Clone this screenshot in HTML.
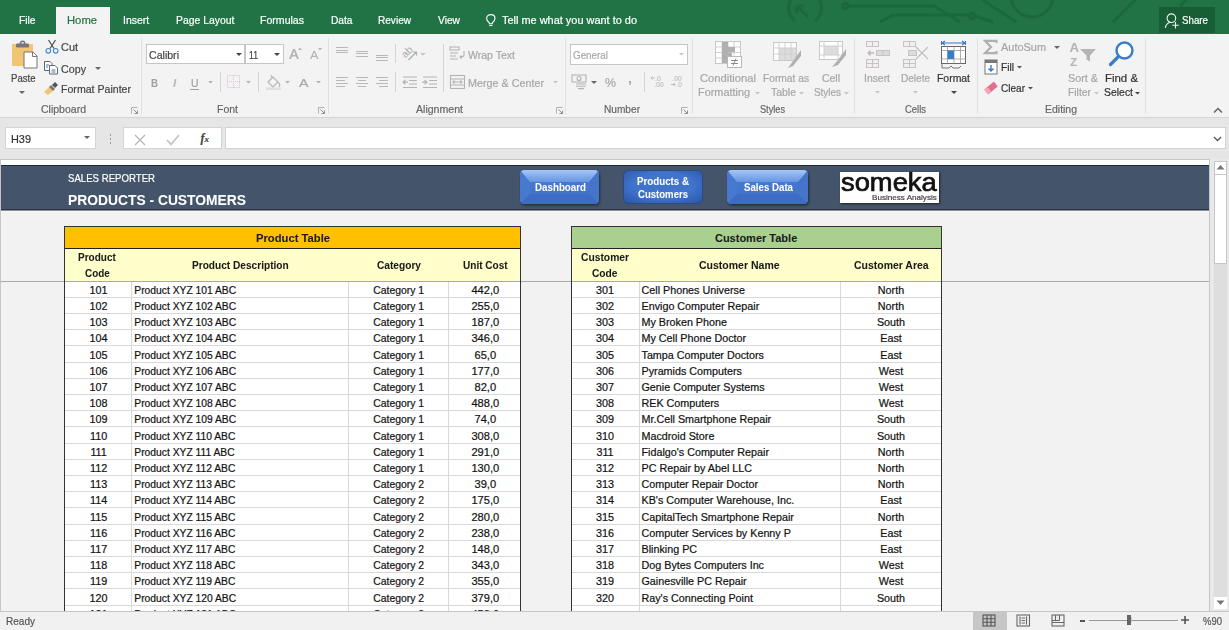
<!DOCTYPE html><html><head><meta charset="utf-8"><style>
html,body{margin:0;padding:0;width:1229px;height:630px;overflow:hidden;background:#f0f0f0}
body{position:relative;font-family:"Liberation Sans",sans-serif}
.t{position:absolute;white-space:nowrap;line-height:1;transform-origin:0 0;-webkit-text-stroke:0.2px currentColor}
svg{overflow:visible}
</style></head><body>
<div style="position:absolute;left:0px;top:0px;width:1229px;height:34px;background:#217346"></div>
<svg style="position:absolute;left:0;top:0" width="1229" height="34"><g fill="none" stroke="#1c673d" stroke-width="3">
<path d="M795 21 A16.5 16.5 0 1 1 815 21"/><path d="M808 17 L797 6 M797 6 L797 13 M797 6 L804 6" stroke-width="3"/>
<circle cx="845.5" cy="6" r="2.8"/><path d="M848.5 6 H934 L960 22"/>
<path d="M880 22 L893 15 H969"/><circle cx="972" cy="16" r="2.8"/><path d="M975 16 L993 22"/>
<path d="M980 -2 L1016 22"/><circle cx="1032" cy="-4" r="21"/>
<path d="M1113 22 L1137 -2"/><path d="M1180 6 L1188 -2"/>
</g></svg>
<div style="position:absolute;left:56px;top:7px;width:54px;height:27px;background:#f3f3f3"></div>
<div class="t" style="left:19.00px;top:15.19px;font-size:11px;color:#ffffff;transform:scaleX(0.9309);">File</div>
<div class="t" style="left:123.20px;top:15.19px;font-size:11px;color:#ffffff;transform:scaleX(0.9487);">Insert</div>
<div class="t" style="left:175.60px;top:15.19px;font-size:11px;color:#ffffff;transform:scaleX(0.9454);">Page Layout</div>
<div class="t" style="left:260.00px;top:15.19px;font-size:11px;color:#ffffff;transform:scaleX(0.9598);">Formulas</div>
<div class="t" style="left:330.50px;top:15.19px;font-size:11px;color:#ffffff;transform:scaleX(0.9253);">Data</div>
<div class="t" style="left:378.00px;top:15.19px;font-size:11px;color:#ffffff;transform:scaleX(0.9149);">Review</div>
<div class="t" style="left:438.00px;top:15.19px;font-size:11px;color:#ffffff;transform:scaleX(0.9304);">View</div>
<div class="t" style="left:67.00px;top:15.19px;font-size:11px;color:#217346;transform:scaleX(1.0224);">Home</div>
<svg style="position:absolute;left:486px;top:14px" width="11" height="13"><g fill="none" stroke="#fff" stroke-width="1.1"><path d="M3.3 8.8 C1.5 7.3 0.6 6 0.6 4.5 C0.6 2.2 2.5 0.6 4.8 0.6 C7.1 0.6 9 2.2 9 4.5 C9 6 8.1 7.3 6.3 8.8 V9.8 H3.3 Z"/><path d="M3.2 11.5 H6.4"/></g></svg>
<div class="t" style="left:502.00px;top:15.19px;font-size:11px;color:#ffffff;transform:scaleX(0.9945);">Tell me what you want to do</div>
<div style="position:absolute;left:1159px;top:7px;width:56px;height:26px;background:#175d35"></div>
<svg style="position:absolute;left:1163px;top:12px" width="18" height="17"><g fill="none" stroke="#f0f5f2" stroke-width="1.1"><circle cx="8.4" cy="6.2" r="4.3"/><path d="M2.3 16 C3 12.5 5.5 10.3 8.2 10.5"/><path d="M12.5 10 V16.5 M9.3 13.2 H15.8"/></g></svg>
<div class="t" style="left:1182.00px;top:15.19px;font-size:11px;color:#ffffff;transform:scaleX(0.8857);">Share</div>
<div style="position:absolute;left:0px;top:34px;width:1229px;height:83px;background:#f3f3f3"></div>
<div style="position:absolute;left:0px;top:117px;width:1229px;height:1px;background:#d5d5d5"></div>
<div style="position:absolute;left:141px;top:38px;width:1px;height:76px;background:#e1e1e1"></div>
<div style="position:absolute;left:328px;top:38px;width:1px;height:76px;background:#e1e1e1"></div>
<div style="position:absolute;left:565px;top:38px;width:1px;height:76px;background:#e1e1e1"></div>
<div style="position:absolute;left:692px;top:38px;width:1px;height:76px;background:#e1e1e1"></div>
<div style="position:absolute;left:854px;top:38px;width:1px;height:76px;background:#e1e1e1"></div>
<div style="position:absolute;left:977px;top:38px;width:1px;height:76px;background:#e1e1e1"></div>
<div style="position:absolute;left:1145px;top:38px;width:1px;height:76px;background:#e1e1e1"></div>
<div class="t" style="left:41.00px;top:103.69px;font-size:11px;color:#666666;transform:scaleX(0.9557);">Clipboard</div>
<div class="t" style="left:217.00px;top:103.69px;font-size:11px;color:#666666;transform:scaleX(0.9541);">Font</div>
<div class="t" style="left:416.00px;top:103.69px;font-size:11px;color:#666666;transform:scaleX(0.9608);">Alignment</div>
<div class="t" style="left:604.00px;top:103.69px;font-size:11px;color:#666666;transform:scaleX(0.9201);">Number</div>
<div class="t" style="left:760.00px;top:103.69px;font-size:11px;color:#666666;transform:scaleX(0.8346);">Styles</div>
<div class="t" style="left:905.00px;top:103.69px;font-size:11px;color:#666666;transform:scaleX(0.8589);">Cells</div>
<div class="t" style="left:1045.00px;top:103.69px;font-size:11px;color:#666666;transform:scaleX(0.9514);">Editing</div>
<svg style="position:absolute;left:131px;top:107px" width="7" height="7"><path d="M0.5 6.5 V0.5 H6.5" fill="none" stroke="#b0b0b0" stroke-width="1"/><path d="M2.5 2.5 L6.5 6.5 M6.5 3.5 V6.5 H3.5" fill="none" stroke="#909090" stroke-width="1"/></svg>
<svg style="position:absolute;left:318px;top:107px" width="7" height="7"><path d="M0.5 6.5 V0.5 H6.5" fill="none" stroke="#b0b0b0" stroke-width="1"/><path d="M2.5 2.5 L6.5 6.5 M6.5 3.5 V6.5 H3.5" fill="none" stroke="#909090" stroke-width="1"/></svg>
<svg style="position:absolute;left:556px;top:107px" width="7" height="7"><path d="M0.5 6.5 V0.5 H6.5" fill="none" stroke="#b0b0b0" stroke-width="1"/><path d="M2.5 2.5 L6.5 6.5 M6.5 3.5 V6.5 H3.5" fill="none" stroke="#909090" stroke-width="1"/></svg>
<svg style="position:absolute;left:681px;top:107px" width="7" height="7"><path d="M0.5 6.5 V0.5 H6.5" fill="none" stroke="#b0b0b0" stroke-width="1"/><path d="M2.5 2.5 L6.5 6.5 M6.5 3.5 V6.5 H3.5" fill="none" stroke="#909090" stroke-width="1"/></svg>
<svg style="position:absolute;left:10px;top:40px" width="30" height="30">
<rect x="2" y="4" width="21" height="22" rx="1" fill="#f0c674"/>
<rect x="6" y="3.5" width="13" height="4" rx="1.2" fill="#777"/><circle cx="12.6" cy="3.3" r="2.1" fill="none" stroke="#777" stroke-width="1.6"/>
<path d="M14 12 H23 L27 16 V28 H14 Z" fill="#fff" stroke="#777" stroke-width="1"/>
<path d="M22.5 12 V16.5 H27" fill="none" stroke="#777" stroke-width="1"/>
</svg>
<div class="t" style="left:10.50px;top:72.69px;font-size:11px;color:#444444;transform:scaleX(0.8710);">Paste</div>
<svg style="position:absolute;left:19px;top:90.5px" width="6" height="3"><path d="M0 0 H6 L3 3 Z" fill="#666"/></svg>
<svg style="position:absolute;left:44px;top:39px" width="16" height="16">
<path d="M4.5 1 L10 9.5 M11.5 1 L6 9.5" stroke="#555" stroke-width="1.3" fill="none"/>
<circle cx="4.3" cy="11.8" r="2.3" fill="none" stroke="#4a88cc" stroke-width="1.1"/><circle cx="11.7" cy="11.8" r="2.3" fill="none" stroke="#4a88cc" stroke-width="1.1"/>
</svg>
<div class="t" style="left:61.00px;top:41.69px;font-size:11px;color:#444444;transform:scaleX(0.9931);">Cut</div>
<svg style="position:absolute;left:43px;top:60px" width="17" height="15">
<path d="M1.5 1.5 H7 L9 3.5 V10.5 H1.5 Z" fill="#fff" stroke="#666" stroke-width="1"/>
<path d="M6.5 5.5 H12 L14.5 8 V14 H6.5 Z" fill="#fff" stroke="#666" stroke-width="1"/>
<path d="M3 5 H6 M3 7 H5" stroke="#3b7dc4" stroke-width="1"/><path d="M8.5 10 H12.5 M8.5 12 H12.5" stroke="#3b7dc4" stroke-width="1"/>
</svg>
<div class="t" style="left:61.00px;top:63.69px;font-size:11px;color:#444444;transform:scaleX(0.9735);">Copy</div>
<svg style="position:absolute;left:95px;top:66.5px" width="6" height="3"><path d="M0 0 H6 L3 3 Z" fill="#666"/></svg>
<svg style="position:absolute;left:43px;top:81px" width="17" height="15">
<path d="M1 11 L6 6 L10 10 L5 14 Z" fill="#f0c674"/>
<path d="M6 6 L10 10 L12 8 L8 4 Z" fill="#777"/><path d="M9 4 L12 1 L15 4 L12 7 Z" fill="#555"/>
</svg>
<div class="t" style="left:61.00px;top:83.69px;font-size:11px;color:#444444;transform:scaleX(0.9622);">Format Painter</div>
<div style="position:absolute;left:146px;top:44px;width:99px;height:20px;background:#fff;border:1px solid #c6c6c6;box-sizing:border-box"></div>
<div style="position:absolute;left:245px;top:44px;width:39px;height:20px;background:#fff;border:1px solid #c6c6c6;box-sizing:border-box"></div>
<div class="t" style="left:149.00px;top:49.69px;font-size:11px;color:#444;transform:scaleX(0.9623);">Calibri</div>
<div class="t" style="left:249.00px;top:49.69px;font-size:11px;color:#444;transform:scaleX(0.7881);">11</div>
<svg style="position:absolute;left:236px;top:52.5px" width="6" height="3"><path d="M0 0 H6 L3 3 Z" fill="#444"/></svg>
<svg style="position:absolute;left:274px;top:52.5px" width="6" height="3"><path d="M0 0 H6 L3 3 Z" fill="#444"/></svg>
<svg style="position:absolute;left:288px;top:46px" width="36" height="15"><g fill="#b4b4b4">
<path d="M1 13 L5 3 H7 L11 13 H9 L8 10.5 H4 L3 13 Z M4.6 9 H7.4 L6 5.2 Z"/><path d="M10 4 L12 1.5 L14 4 Z"/>
<path d="M22 13 L25.5 5 H27 L30.5 13 H29 L28.3 11 H24.2 L23.5 13 Z M24.7 9.7 H27.8 L26.2 6.3 Z"/><path d="M30 2 L32 4.5 L34 2 Z"/>
</g></svg>
<div class="t" style="left:151.00px;top:78.19px;font-size:11px;color:#a0a0a0;font-weight:bold;-webkit-text-stroke:0.05px currentColor;transform:scaleX(0.8812);">B</div>
<div class="t" style="left:173px;top:77.8px;font-size:11.5px;color:#a8a8a8;font-style:italic">I</div>
<div class="t" style="left:190.50px;top:77.69px;font-size:11px;color:#a0a0a0;transform:scaleX(0.9441);">U</div>
<div style="position:absolute;left:190px;top:89px;width:9px;height:1px;background:#a0a0a0"></div>
<svg style="position:absolute;left:207.5px;top:80.75px" width="5.0" height="2.5"><path d="M0 0 H5.0 L2.5 2.5 Z" fill="#b4b4b4"/></svg>
<div style="position:absolute;left:220px;top:72px;width:1px;height:20px;background:#d4d4d4"></div>
<svg style="position:absolute;left:227px;top:75px" width="14" height="14"><g fill="none" stroke="#d8c0d0" stroke-width="1" stroke-dasharray="1 1"><rect x="0.5" y="0.5" width="12" height="12"/><path d="M6.5 0 V13 M0 6.5 H13"/></g></svg>
<svg style="position:absolute;left:245.5px;top:80.75px" width="5.0" height="2.5"><path d="M0 0 H5.0 L2.5 2.5 Z" fill="#b4b4b4"/></svg>
<div style="position:absolute;left:258px;top:72px;width:1px;height:20px;background:#d4d4d4"></div>
<svg style="position:absolute;left:265px;top:74px" width="18" height="16"><g fill="none" stroke="#b4b4b4" stroke-width="1.1"><path d="M3 8 L8 3 L13 8 L8 13 Z"/><path d="M6 1 L7.5 4"/><path d="M13 8 C15 10 15 12 14 13"/></g><rect x="1" y="13.5" width="15" height="2.5" fill="#e0e0e0"/></svg>
<svg style="position:absolute;left:284.5px;top:80.75px" width="5.0" height="2.5"><path d="M0 0 H5.0 L2.5 2.5 Z" fill="#b4b4b4"/></svg>
<div class="t" style="left:298.50px;top:77.77px;font-size:11.5px;color:#a9a9a9;transform:scaleX(1.2385);">A</div>
<svg style="position:absolute;left:315.5px;top:80.75px" width="5.0" height="2.5"><path d="M0 0 H5.0 L2.5 2.5 Z" fill="#b4b4b4"/></svg>
<div style="position:absolute;left:336px;top:47.0px;width:12px;height:1.2px;background:#b8b8b8"></div><div style="position:absolute;left:336px;top:49.6px;width:12px;height:1.2px;background:#b8b8b8"></div><div style="position:absolute;left:336px;top:52.2px;width:12px;height:1.2px;background:#b8b8b8"></div>
<div style="position:absolute;left:356px;top:50.5px;width:12px;height:1.2px;background:#b8b8b8"></div><div style="position:absolute;left:356px;top:53.1px;width:12px;height:1.2px;background:#b8b8b8"></div><div style="position:absolute;left:356px;top:55.7px;width:12px;height:1.2px;background:#b8b8b8"></div>
<div style="position:absolute;left:376px;top:54.5px;width:12px;height:1.2px;background:#b8b8b8"></div><div style="position:absolute;left:376px;top:57.1px;width:12px;height:1.2px;background:#b8b8b8"></div><div style="position:absolute;left:376px;top:59.7px;width:12px;height:1.2px;background:#b8b8b8"></div>
<div style="position:absolute;left:395px;top:44px;width:1px;height:19px;background:#d4d4d4"></div>
<svg style="position:absolute;left:398px;top:44px" width="30" height="20"><text x="0" y="0" transform="translate(9.5 8.5) rotate(-45)" text-anchor="middle" dominant-baseline="middle" font-family="Liberation Sans" font-size="10.5" fill="#ababab">ab</text>
<path d="M10.5 16 L18.5 8 M15 8 H18.5 V11.5" fill="none" stroke="#ababab" stroke-width="1.1"/><path d="M22 9 H28 L25 11.5 Z" fill="#c4c4c4"/></svg>
<div style="position:absolute;left:336px;top:77.3px;width:12px;height:1.2px;background:#b8b8b8"></div><div style="position:absolute;left:336px;top:80.1px;width:9px;height:1.2px;background:#b8b8b8"></div><div style="position:absolute;left:336px;top:83.0px;width:12px;height:1.2px;background:#b8b8b8"></div><div style="position:absolute;left:336px;top:85.8px;width:9px;height:1.2px;background:#b8b8b8"></div>
<div style="position:absolute;left:356px;top:77.3px;width:12px;height:1.2px;background:#b8b8b8"></div><div style="position:absolute;left:358px;top:80.1px;width:8px;height:1.2px;background:#b8b8b8"></div><div style="position:absolute;left:356px;top:83.0px;width:12px;height:1.2px;background:#b8b8b8"></div><div style="position:absolute;left:358px;top:85.8px;width:8px;height:1.2px;background:#b8b8b8"></div>
<div style="position:absolute;left:376px;top:77.3px;width:12px;height:1.2px;background:#b8b8b8"></div><div style="position:absolute;left:379px;top:80.1px;width:9px;height:1.2px;background:#b8b8b8"></div><div style="position:absolute;left:376px;top:83.0px;width:12px;height:1.2px;background:#b8b8b8"></div><div style="position:absolute;left:379px;top:85.8px;width:9px;height:1.2px;background:#b8b8b8"></div>
<div style="position:absolute;left:395px;top:72px;width:1px;height:20px;background:#d4d4d4"></div>
<svg style="position:absolute;left:402px;top:76px" width="38" height="14"><g stroke="#b4b4b4" stroke-width="1.2" fill="none">
<path d="M1 1 H15 M7 4.5 H15 M7 8 H15 M1 11.5 H15"/><path d="M6 6.2 H1 M3.5 4 L1 6.2 L3.5 8.4"/>
<path d="M21 1 H35 M27 4.5 H35 M27 8 H35 M21 11.5 H35"/><path d="M20 6.2 H25 M22.5 4 L25 6.2 L22.5 8.4"/></g></svg>
<div style="position:absolute;left:443px;top:44px;width:1px;height:48px;background:#d4d4d4"></div>
<svg style="position:absolute;left:449px;top:46px" width="17" height="16"><g stroke="#b4b4b4" stroke-width="1.1" fill="none">
<rect x="1" y="1" width="9" height="3"/><path d="M1 7 H9 M1 10 H7 M1 13 H9"/><path d="M15 5 V9 C15 11 13 11 11 11 M12.5 9.5 L11 11 L12.5 12.5"/></g></svg>
<div class="t" style="left:468.00px;top:49.99px;font-size:11px;color:#a6a6a6;transform:scaleX(0.9570);">Wrap Text</div>
<svg style="position:absolute;left:449px;top:74px" width="17" height="16"><g stroke="#b4b4b4" stroke-width="1.1" fill="none">
<rect x="1.5" y="1.5" width="14" height="13"/><path d="M1.5 5 H15.5 M1.5 11 H15.5"/><path d="M4 8 H13 M5.5 6.5 L4 8 L5.5 9.5 M11.5 6.5 L13 8 L11.5 9.5"/></g></svg>
<div class="t" style="left:468.00px;top:77.69px;font-size:11px;color:#a6a6a6;transform:scaleX(0.9788);">Merge &amp; Center</div>
<svg style="position:absolute;left:552.5px;top:80.75px" width="5.0" height="2.5"><path d="M0 0 H5.0 L2.5 2.5 Z" fill="#c4c4c4"/></svg>
<div style="position:absolute;left:570px;top:44px;width:118px;height:21px;background:#fff;border:1px solid #c6c6c6;box-sizing:border-box"></div>
<div class="t" style="left:573.00px;top:49.69px;font-size:11px;color:#a8a8a8;transform:scaleX(0.8943);">General</div>
<svg style="position:absolute;left:678.5px;top:52.75px" width="5.0" height="2.5"><path d="M0 0 H5.0 L2.5 2.5 Z" fill="#c4c4c4"/></svg>
<svg style="position:absolute;left:571px;top:74px" width="18" height="16"><g fill="none" stroke="#b4b4b4" stroke-width="1.1">
<rect x="1" y="1" width="14" height="7"/><circle cx="8" cy="4.5" r="2"/><path d="M5 10 H15 M5 12.3 H15 M7 14.6 H13"/></g></svg>
<svg style="position:absolute;left:591px;top:80.5px" width="6" height="3"><path d="M0 0 H6 L3 3 Z" fill="#666"/></svg>
<div class="t" style="left:605.00px;top:77.34px;font-size:12px;color:#aaaaaa;transform:scaleX(1.0310);">%</div>
<div class="t" style="left:628.00px;top:72.84px;font-size:12px;color:#aaaaaa;font-weight:bold;-webkit-text-stroke:0.05px currentColor;transform:scaleX(1.1999);">,</div>
<div style="position:absolute;left:644px;top:72px;width:1px;height:20px;background:#d4d4d4"></div>
<svg style="position:absolute;left:650px;top:74px" width="36" height="16"><g fill="#b4b4b4" font-family="Liberation Sans" font-size="7">
<text x="5" y="6.5">.0</text><text x="4" y="13">.00</text><path d="M1 4 H5 M2.5 2.5 L1 4 L2.5 5.5" stroke="#b4b4b4" fill="none" stroke-width="0.9"/>
<text x="22" y="6.5">.00</text><text x="26" y="13">.0</text><path d="M21 10.5 H25 M23.5 9 L25 10.5 L23.5 12" stroke="#b4b4b4" fill="none" stroke-width="0.9"/></g></svg>
<svg style="position:absolute;left:715px;top:41px" width="29" height="28">
<g fill="#fff" stroke="#c8c8c8" stroke-width="1"><rect x="0.5" y="0.5" width="25" height="22"/></g>
<g stroke="#d0d0d0" stroke-width="1"><path d="M7 0.5 V22.5 M13 0.5 V22.5 M19 0.5 V22.5 M0.5 6 H25.5 M0.5 11.5 H25.5 M0.5 17 H25.5"/></g>
<rect x="7" y="1" width="6" height="21" fill="#b0b0b0"/><rect x="13" y="6" width="7" height="5" fill="#b0b0b0"/><rect x="13" y="11.5" width="4" height="5" fill="#b0b0b0"/>
<rect x="12.5" y="15.5" width="14" height="11" fill="#fff" stroke="#b8b8b8"/><path d="M16 19.5 H23 M16 22.5 H23 M21 17.5 L18 24.5" stroke="#888" stroke-width="1"/>
</svg>
<div class="t" style="left:700.00px;top:72.69px;font-size:11px;color:#a6a6a6;transform:scaleX(1.0175);">Conditional</div>
<div class="t" style="left:698.00px;top:86.99px;font-size:11px;color:#a6a6a6;transform:scaleX(0.9891);">Formatting</div>
<svg style="position:absolute;left:754.5px;top:91.75px" width="5.0" height="2.5"><path d="M0 0 H5.0 L2.5 2.5 Z" fill="#c4c4c4"/></svg>
<svg style="position:absolute;left:773px;top:42px" width="30" height="28">
<rect x="0.5" y="0.5" width="23" height="18" fill="#fff" stroke="#c8c8c8"/>
<rect x="6" y="6" width="17" height="12" fill="#dcdcdc"/>
<path d="M6 0.5 V18.5 M12 0.5 V18.5 M18 0.5 V18.5 M0.5 6 H23.5 M0.5 12 H23.5" stroke="#d0d0d0"/>
<path d="M15 26 L20 19 L28 8 V14 L20 24 Z" fill="#b0b0b0"/>
</svg>
<div class="t" style="left:763.00px;top:72.69px;font-size:11px;color:#a6a6a6;transform:scaleX(0.9291);">Format as</div>
<div class="t" style="left:771.00px;top:86.99px;font-size:11px;color:#a6a6a6;transform:scaleX(0.9507);">Table</div>
<svg style="position:absolute;left:798.5px;top:91.75px" width="5.0" height="2.5"><path d="M0 0 H5.0 L2.5 2.5 Z" fill="#c4c4c4"/></svg>
<svg style="position:absolute;left:819px;top:41px" width="30" height="28">
<rect x="0.5" y="0.5" width="23" height="18" fill="#fff" stroke="#c8c8c8"/>
<rect x="5" y="5" width="14" height="9" fill="#dcdcdc"/>
<path d="M5 0.5 V18.5 M19 0.5 V18.5 M0.5 5 H23.5 M0.5 14 H23.5" stroke="#d0d0d0"/>
<path d="M13 26 L19 19 L27 8 V14 L19 24 Z" fill="#b0b0b0"/>
</svg>
<div class="t" style="left:822.00px;top:72.69px;font-size:11px;color:#a6a6a6;transform:scaleX(0.9499);">Cell</div>
<div class="t" style="left:814.00px;top:86.99px;font-size:11px;color:#a6a6a6;transform:scaleX(0.9013);">Styles</div>
<svg style="position:absolute;left:843.5px;top:91.75px" width="5.0" height="2.5"><path d="M0 0 H5.0 L2.5 2.5 Z" fill="#c4c4c4"/></svg>
<svg style="position:absolute;left:865px;top:40px" width="28" height="28"><g fill="#f4eef4" stroke="#c4c4c4" stroke-width="1">
<rect x="1.5" y="1.5" width="12" height="5"/><path d="M7.5 1.5 V6.5"/>
<rect x="11.5" y="10.5" width="13" height="5" fill="#dcdcdc"/><path d="M18 10.5 V15.5"/>
<rect x="1.5" y="19.5" width="12" height="8"/><path d="M7.5 19.5 V27.5 M1.5 23.5 H13.5"/></g>
<path d="M9 13 H3 M5.5 10.5 L3 13 L5.5 15.5" stroke="#b8b8b8" stroke-width="1.3" fill="none"/></svg>
<div class="t" style="left:864.00px;top:72.69px;font-size:11px;color:#a6a6a6;transform:scaleX(0.9451);">Insert</div>
<svg style="position:absolute;left:874.5px;top:90.75px" width="5.0" height="2.5"><path d="M0 0 H5.0 L2.5 2.5 Z" fill="#c4c4c4"/></svg>
<svg style="position:absolute;left:902px;top:40px" width="30" height="28"><g fill="#f4eef4" stroke="#c4c4c4" stroke-width="1">
<rect x="1.5" y="1.5" width="12" height="5"/><path d="M7.5 1.5 V6.5"/>
<rect x="6.5" y="10.5" width="8" height="5" fill="#dcdcdc"/>
<rect x="1.5" y="19.5" width="12" height="8"/><path d="M7.5 19.5 V27.5 M1.5 23.5 H13.5"/></g>
<path d="M14 7 L26 19 M26 7 L14 19" stroke="#c0c0c0" stroke-width="1.3"/></svg>
<div class="t" style="left:901.00px;top:72.69px;font-size:11px;color:#a6a6a6;transform:scaleX(0.9120);">Delete</div>
<svg style="position:absolute;left:912.5px;top:90.75px" width="5.0" height="2.5"><path d="M0 0 H5.0 L2.5 2.5 Z" fill="#c4c4c4"/></svg>
<svg style="position:absolute;left:940px;top:40px" width="28" height="30">
<path d="M1.5 1 V5 M25.5 1 V5 M2 3 H25 M5 1 L2 3 L5 5 M22 1 L25 3 L22 5" stroke="#3b7dc4" stroke-width="1.1" fill="none"/>
<rect x="1.5" y="6.5" width="24" height="17" fill="#fff" stroke="#666"/>
<path d="M7.5 6.5 V23.5 M14 6.5 V23.5 M20.5 6.5 V23.5 M1.5 10.5 H25.5 M1.5 19 H25.5" stroke="#999" stroke-width="0.8"/>
<rect x="7.5" y="10.5" width="6.5" height="8.5" fill="#3b7dc4"/>
<path d="M2 24 V28 H9 L11 26 L13 28 H19 L21 26" fill="none" stroke="#777" stroke-width="1"/>
</svg>
<div class="t" style="left:937.00px;top:72.69px;font-size:11px;color:#333;transform:scaleX(0.9472);">Format</div>
<svg style="position:absolute;left:951px;top:90.5px" width="6" height="3"><path d="M0 0 H6 L3 3 Z" fill="#444"/></svg>
<svg style="position:absolute;left:983px;top:39px" width="16" height="16"><path d="M13.5 4 V1.8 H2 L8 8 L2 14.2 H13.5 V12" fill="none" stroke="#b0b0b0" stroke-width="2.2" stroke-linejoin="miter"/></svg>
<div class="t" style="left:1001.00px;top:42.19px;font-size:11px;color:#a6a6a6;transform:scaleX(0.9945);">AutoSum</div>
<svg style="position:absolute;left:1054px;top:45.5px" width="6" height="3"><path d="M0 0 H6 L3 3 Z" fill="#666"/></svg>
<svg style="position:absolute;left:984px;top:59px" width="15" height="17"><rect x="1" y="1" width="12" height="14" fill="#fff" stroke="#777"/><rect x="1" y="1" width="12" height="3" fill="#777"/>
<path d="M7 6 V12 M4.5 9.5 L7 12 L9.5 9.5" stroke="#3b7dc4" stroke-width="1.5" fill="none"/></svg>
<div class="t" style="left:1001.00px;top:61.69px;font-size:11px;color:#333;transform:scaleX(0.9252);">Fill</div>
<svg style="position:absolute;left:1016.5px;top:65.75px" width="5.0" height="2.5"><path d="M0 0 H5.0 L2.5 2.5 Z" fill="#555"/></svg>
<svg style="position:absolute;left:984px;top:81px" width="14" height="14"><g transform="translate(7 7) rotate(-40)"><rect x="-6.3" y="-3.2" width="12.6" height="6.4" rx="1" fill="#e36f8c"/><rect x="-6.3" y="-3.2" width="4.2" height="6.4" rx="1" fill="#f2a7b8"/></g></svg>
<div class="t" style="left:1001.00px;top:83.49px;font-size:11px;color:#333;transform:scaleX(0.9130);">Clear</div>
<svg style="position:absolute;left:1027.5px;top:86.75px" width="5.0" height="2.5"><path d="M0 0 H5.0 L2.5 2.5 Z" fill="#555"/></svg>
<svg style="position:absolute;left:1069px;top:41px" width="28" height="27"><g fill="#b4b4b4">
<text x="0.5" y="11.3" font-family="Liberation Sans" font-size="13" font-weight="bold">A</text><text x="1" y="24.5" font-family="Liberation Sans" font-size="11.5" font-weight="bold">Z</text>
<path d="M11 8 H27 L21 14.5 V20.5 L17.5 18.5 V14.5 Z"/></g></svg>
<div class="t" style="left:1068.00px;top:72.69px;font-size:11px;color:#a6a6a6;transform:scaleX(0.9814);">Sort &amp;</div>
<div class="t" style="left:1068.00px;top:86.99px;font-size:11px;color:#a6a6a6;transform:scaleX(0.9409);">Filter</div>
<svg style="position:absolute;left:1093.5px;top:91.75px" width="5.0" height="2.5"><path d="M0 0 H5.0 L2.5 2.5 Z" fill="#c4c4c4"/></svg>
<svg style="position:absolute;left:1108px;top:40px" width="28" height="28"><circle cx="16.5" cy="10.5" r="8" fill="#fff" stroke="#3b7dc4" stroke-width="2.4"/><path d="M10.5 16.5 L2.5 24.5" stroke="#3b7dc4" stroke-width="3.2" stroke-linecap="round"/></svg>
<div class="t" style="left:1105.00px;top:72.69px;font-size:11px;color:#333;transform:scaleX(1.0380);">Find &amp;</div>
<div class="t" style="left:1104.00px;top:86.99px;font-size:11px;color:#333;transform:scaleX(0.9485);">Select</div>
<svg style="position:absolute;left:1134.5px;top:91.75px" width="5.0" height="2.5"><path d="M0 0 H5.0 L2.5 2.5 Z" fill="#444"/></svg>
<svg style="position:absolute;left:1213px;top:107px" width="10" height="7"><path d="M1 5.5 L5 1.5 L9 5.5" fill="none" stroke="#666" stroke-width="1.5"/></svg>
<div style="position:absolute;left:0px;top:118px;width:1229px;height:41px;background:#e6e6e6"></div>
<div style="position:absolute;left:5px;top:127px;width:91px;height:22px;background:#fff;border:1px solid #d4d4d4;box-sizing:border-box"></div>
<div class="t" style="left:11.00px;top:134.19px;font-size:11px;color:#333;transform:scaleX(0.9911);">H39</div>
<svg style="position:absolute;left:84px;top:136.0px" width="6" height="3"><path d="M0 0 H6 L3 3 Z" fill="#666"/></svg>
<div style="position:absolute;left:109.5px;top:134px;width:1.5px;height:1.5px;background:#9a9a9a"></div>
<div style="position:absolute;left:109.5px;top:138px;width:1.5px;height:1.5px;background:#9a9a9a"></div>
<div style="position:absolute;left:109.5px;top:142px;width:1.5px;height:1.5px;background:#9a9a9a"></div>
<div style="position:absolute;left:123px;top:127px;width:99px;height:22px;background:#fff;border:1px solid #d4d4d4;box-sizing:border-box"></div>
<svg style="position:absolute;left:134px;top:134px" width="12" height="12"><path d="M1 1 L11 11 M11 1 L1 11" stroke="#b8b8b8" stroke-width="1.4"/></svg>
<svg style="position:absolute;left:166px;top:134px" width="14" height="12"><path d="M1 6 L5 10.5 L13 1" fill="none" stroke="#c0c0c0" stroke-width="1.6"/></svg>
<div class="t" style="left:200.5px;top:131.5px;font-size:12px;color:#444;font-style:italic;font-family:'Liberation Serif',serif;font-weight:bold">f<span style="font-size:9px">x</span></div>
<div style="position:absolute;left:225px;top:127px;width:1001px;height:22px;background:#fff;border:1px solid #d4d4d4;box-sizing:border-box"></div>
<svg style="position:absolute;left:1213px;top:136px" width="9" height="6"><path d="M1 1 L4.5 4.5 L8 1" fill="none" stroke="#555" stroke-width="1.3"/></svg>
<div style="position:absolute;left:0px;top:159px;width:1229px;height:453px;background:#e9e9e9"></div>
<div style="position:absolute;left:0px;top:159px;width:1210px;height:453px;background:#f2f2f2"></div>
<div style="position:absolute;left:0px;top:159px;width:1210px;height:1px;background:#c6c6c6"></div>
<div style="position:absolute;left:0px;top:159px;width:1px;height:453px;background:#c6c6c6"></div>
<div style="position:absolute;left:1209px;top:159px;width:1px;height:453px;background:#c6c6c6"></div>
<div style="position:absolute;left:1px;top:160px;width:1208px;height:5px;background:#ffffff"></div>
<div style="position:absolute;left:1px;top:165px;width:1208px;height:45px;background:#44546a"></div>
<div style="position:absolute;left:1px;top:165px;width:1208px;height:1px;background:#1f2a3a"></div>
<div style="position:absolute;left:1px;top:209px;width:1208px;height:1px;background:#2c3646"></div>
<div style="position:absolute;left:1px;top:210px;width:1208px;height:1px;background:#8e9096"></div>
<div style="position:absolute;left:1px;top:211px;width:1208px;height:1px;background:#f6f6f6"></div>
<div class="t" style="left:68.00px;top:173.27px;font-size:11.5px;color:#ffffff;transform:scaleX(0.8368);">SALES REPORTER</div>
<div class="t" style="left:68.00px;top:192.65px;font-size:14px;color:#ffffff;font-weight:bold;-webkit-text-stroke:0.05px currentColor;transform:scaleX(0.9878);">PRODUCTS - CUSTOMERS</div>
<svg style="position:absolute;left:520px;top:170px;overflow:visible" width="79" height="34"><defs><clipPath id="bc1"><rect x="0" y="0" width="79" height="34" rx="4.5"/></clipPath><linearGradient id="tg1" x1="0" y1="0" x2="0" y2="1"><stop offset="0" stop-color="#a6c6f8"/><stop offset="1" stop-color="#6495e0"/></linearGradient><linearGradient id="cg1" x1="0" y1="0" x2="0" y2="1"><stop offset="0" stop-color="#4c7dd4"/><stop offset="1" stop-color="#3e6ec6"/></linearGradient><filter id="sh1" x="-10%" y="-10%" width="130%" height="140%"><feDropShadow dx="1" dy="1.5" stdDeviation="1" flood-color="#1a2230" flood-opacity="0.8"/></filter></defs><g filter="url(#sh1)"><rect x="0" y="0" width="79" height="34" rx="4.5" fill="#3f6fc6"/></g><g clip-path="url(#bc1)"><rect x="0" y="0" width="79" height="34" fill="url(#cg1)"/><path d="M0 0 L10 12 L10 24 L0 34 Z" fill="#4879d0"/><path d="M79 0 L69 12 L69 24 L79 34 Z" fill="#4475cb"/><path d="M0 34 L10 24 L69 24 L79 34 Z" fill="#3d6cc2"/><path d="M0 0 L79 0 L69 12 L10 12 Z" fill="url(#tg1)"/></g></svg>
<div class="t" style="left:534.50px;top:182.29px;font-size:11px;color:#ffffff;font-weight:bold;-webkit-text-stroke:0.05px currentColor;transform:scaleX(0.8876);">Dashboard</div>
<svg style="position:absolute;left:623px;top:170px;overflow:visible" width="80" height="34"><defs><radialGradient id="pg2" cx="50%" cy="45%" r="70%"><stop offset="0.55" stop-color="#4073cc"/><stop offset="1" stop-color="#2b57a8"/></radialGradient></defs><rect x="0.5" y="0.5" width="79" height="33" rx="5" fill="url(#pg2)" stroke="#2a4a86" stroke-width="1"/></svg>
<div class="t" style="left:637.00px;top:176.09px;font-size:11px;color:#ffffff;font-weight:bold;-webkit-text-stroke:0.05px currentColor;transform:scaleX(0.8862);">Products &amp;</div>
<div class="t" style="left:638.00px;top:189.49px;font-size:11px;color:#ffffff;font-weight:bold;-webkit-text-stroke:0.05px currentColor;transform:scaleX(0.8702);">Customers</div>
<svg style="position:absolute;left:727px;top:170px;overflow:visible" width="81" height="34"><defs><clipPath id="bc3"><rect x="0" y="0" width="81" height="34" rx="4.5"/></clipPath><linearGradient id="tg3" x1="0" y1="0" x2="0" y2="1"><stop offset="0" stop-color="#a6c6f8"/><stop offset="1" stop-color="#6495e0"/></linearGradient><linearGradient id="cg3" x1="0" y1="0" x2="0" y2="1"><stop offset="0" stop-color="#4c7dd4"/><stop offset="1" stop-color="#3e6ec6"/></linearGradient><filter id="sh3" x="-10%" y="-10%" width="130%" height="140%"><feDropShadow dx="1" dy="1.5" stdDeviation="1" flood-color="#1a2230" flood-opacity="0.8"/></filter></defs><g filter="url(#sh3)"><rect x="0" y="0" width="81" height="34" rx="4.5" fill="#3f6fc6"/></g><g clip-path="url(#bc3)"><rect x="0" y="0" width="81" height="34" fill="url(#cg3)"/><path d="M0 0 L10 12 L10 24 L0 34 Z" fill="#4879d0"/><path d="M81 0 L71 12 L71 24 L81 34 Z" fill="#4475cb"/><path d="M0 34 L10 24 L71 24 L81 34 Z" fill="#3d6cc2"/><path d="M0 0 L81 0 L71 12 L10 12 Z" fill="url(#tg3)"/></g></svg>
<div class="t" style="left:743.50px;top:182.09px;font-size:11px;color:#ffffff;font-weight:bold;-webkit-text-stroke:0.05px currentColor;transform:scaleX(0.8806);">Sales Data</div>
<div style="position:absolute;left:840px;top:172px;width:99px;height:31px;background:#fff;box-shadow:1px 1px 2px #222"></div>
<div class="t" style="left:841.30px;top:169.64px;font-size:25px;color:#111111;-webkit-text-stroke:0.7px #111;transform:scaleX(1.0932);">someka</div>
<div class="t" style="left:872.20px;top:193.63px;font-size:8px;color:#444;transform:scaleX(1.0120);">Business Analysis</div>
<div style="position:absolute;left:1px;top:281px;width:1208px;height:1px;background:#a9a9a9"></div>
<div style="position:absolute;left:64px;top:226px;width:456px;height:389px;background:#ffffff"></div>
<div style="position:absolute;left:64px;top:226px;width:456px;height:22px;background:#ffc000"></div>
<div style="position:absolute;left:64px;top:249px;width:456px;height:32px;background:#ffffcc"></div>
<div style="position:absolute;left:64px;top:297px;width:456px;height:1px;background:#d9d9d9"></div>
<div style="position:absolute;left:64px;top:313px;width:456px;height:1px;background:#d9d9d9"></div>
<div style="position:absolute;left:64px;top:329px;width:456px;height:1px;background:#d9d9d9"></div>
<div style="position:absolute;left:64px;top:345px;width:456px;height:1px;background:#d9d9d9"></div>
<div style="position:absolute;left:64px;top:362px;width:456px;height:1px;background:#d9d9d9"></div>
<div style="position:absolute;left:64px;top:378px;width:456px;height:1px;background:#d9d9d9"></div>
<div style="position:absolute;left:64px;top:394px;width:456px;height:1px;background:#d9d9d9"></div>
<div style="position:absolute;left:64px;top:410px;width:456px;height:1px;background:#d9d9d9"></div>
<div style="position:absolute;left:64px;top:426px;width:456px;height:1px;background:#d9d9d9"></div>
<div style="position:absolute;left:64px;top:443px;width:456px;height:1px;background:#d9d9d9"></div>
<div style="position:absolute;left:64px;top:459px;width:456px;height:1px;background:#d9d9d9"></div>
<div style="position:absolute;left:64px;top:475px;width:456px;height:1px;background:#d9d9d9"></div>
<div style="position:absolute;left:64px;top:491px;width:456px;height:1px;background:#d9d9d9"></div>
<div style="position:absolute;left:64px;top:507px;width:456px;height:1px;background:#d9d9d9"></div>
<div style="position:absolute;left:64px;top:524px;width:456px;height:1px;background:#d9d9d9"></div>
<div style="position:absolute;left:64px;top:540px;width:456px;height:1px;background:#d9d9d9"></div>
<div style="position:absolute;left:64px;top:556px;width:456px;height:1px;background:#d9d9d9"></div>
<div style="position:absolute;left:64px;top:572px;width:456px;height:1px;background:#d9d9d9"></div>
<div style="position:absolute;left:64px;top:588px;width:456px;height:1px;background:#d9d9d9"></div>
<div style="position:absolute;left:64px;top:605px;width:456px;height:1px;background:#d9d9d9"></div>
<div style="position:absolute;left:131px;top:282px;width:1px;height:329px;background:#d9d9d9"></div>
<div style="position:absolute;left:348px;top:282px;width:1px;height:329px;background:#d9d9d9"></div>
<div style="position:absolute;left:448px;top:282px;width:1px;height:329px;background:#d9d9d9"></div>
<div style="position:absolute;left:64px;top:226px;width:457px;height:1px;background:#333"></div>
<div style="position:absolute;left:64px;top:248px;width:456px;height:1px;background:#222"></div>
<div style="position:absolute;left:64px;top:281px;width:456px;height:1px;background:#a9a9a9"></div>
<div style="position:absolute;left:64px;top:226px;width:1px;height:385px;background:#333"></div>
<div style="position:absolute;left:520px;top:226px;width:1px;height:385px;background:#333"></div>
<div style="position:absolute;left:571px;top:226px;width:370px;height:389px;background:#ffffff"></div>
<div style="position:absolute;left:571px;top:226px;width:370px;height:22px;background:#a9d08e"></div>
<div style="position:absolute;left:571px;top:249px;width:370px;height:32px;background:#ffffcc"></div>
<div style="position:absolute;left:571px;top:297px;width:370px;height:1px;background:#d9d9d9"></div>
<div style="position:absolute;left:571px;top:313px;width:370px;height:1px;background:#d9d9d9"></div>
<div style="position:absolute;left:571px;top:329px;width:370px;height:1px;background:#d9d9d9"></div>
<div style="position:absolute;left:571px;top:345px;width:370px;height:1px;background:#d9d9d9"></div>
<div style="position:absolute;left:571px;top:362px;width:370px;height:1px;background:#d9d9d9"></div>
<div style="position:absolute;left:571px;top:378px;width:370px;height:1px;background:#d9d9d9"></div>
<div style="position:absolute;left:571px;top:394px;width:370px;height:1px;background:#d9d9d9"></div>
<div style="position:absolute;left:571px;top:410px;width:370px;height:1px;background:#d9d9d9"></div>
<div style="position:absolute;left:571px;top:426px;width:370px;height:1px;background:#d9d9d9"></div>
<div style="position:absolute;left:571px;top:443px;width:370px;height:1px;background:#d9d9d9"></div>
<div style="position:absolute;left:571px;top:459px;width:370px;height:1px;background:#d9d9d9"></div>
<div style="position:absolute;left:571px;top:475px;width:370px;height:1px;background:#d9d9d9"></div>
<div style="position:absolute;left:571px;top:491px;width:370px;height:1px;background:#d9d9d9"></div>
<div style="position:absolute;left:571px;top:507px;width:370px;height:1px;background:#d9d9d9"></div>
<div style="position:absolute;left:571px;top:524px;width:370px;height:1px;background:#d9d9d9"></div>
<div style="position:absolute;left:571px;top:540px;width:370px;height:1px;background:#d9d9d9"></div>
<div style="position:absolute;left:571px;top:556px;width:370px;height:1px;background:#d9d9d9"></div>
<div style="position:absolute;left:571px;top:572px;width:370px;height:1px;background:#d9d9d9"></div>
<div style="position:absolute;left:571px;top:588px;width:370px;height:1px;background:#d9d9d9"></div>
<div style="position:absolute;left:571px;top:605px;width:370px;height:1px;background:#d9d9d9"></div>
<div style="position:absolute;left:639px;top:282px;width:1px;height:329px;background:#d9d9d9"></div>
<div style="position:absolute;left:840px;top:282px;width:1px;height:329px;background:#d9d9d9"></div>
<div style="position:absolute;left:571px;top:226px;width:371px;height:1px;background:#333"></div>
<div style="position:absolute;left:571px;top:248px;width:370px;height:1px;background:#222"></div>
<div style="position:absolute;left:571px;top:281px;width:370px;height:1px;background:#a9a9a9"></div>
<div style="position:absolute;left:571px;top:226px;width:1px;height:385px;background:#333"></div>
<div style="position:absolute;left:941px;top:226px;width:1px;height:385px;background:#333"></div>
<div style="position:absolute;left:0;top:0;width:1229px;height:611px;overflow:hidden"><div class="t" style="left:89.59px;top:285.26px;font-size:10.8px;color:#111111;">101</div><div class="t" style="left:134.30px;top:285.68px;font-size:10.3px;color:#111111;">Product XYZ 101 ABC</div><div class="t" style="left:373.26px;top:285.60px;font-size:10.4px;color:#111111;">Category 1</div><div class="t" style="left:471.41px;top:285.00px;font-size:11.1px;color:#111111;">442,0</div><div class="t" style="left:89.59px;top:301.26px;font-size:10.8px;color:#111111;">102</div><div class="t" style="left:134.30px;top:301.68px;font-size:10.3px;color:#111111;">Product XYZ 102 ABC</div><div class="t" style="left:373.26px;top:301.60px;font-size:10.4px;color:#111111;">Category 1</div><div class="t" style="left:471.41px;top:301.00px;font-size:11.1px;color:#111111;">255,0</div><div class="t" style="left:89.59px;top:317.26px;font-size:10.8px;color:#111111;">103</div><div class="t" style="left:134.30px;top:317.68px;font-size:10.3px;color:#111111;">Product XYZ 103 ABC</div><div class="t" style="left:373.26px;top:317.60px;font-size:10.4px;color:#111111;">Category 1</div><div class="t" style="left:471.41px;top:317.00px;font-size:11.1px;color:#111111;">187,0</div><div class="t" style="left:89.59px;top:333.26px;font-size:10.8px;color:#111111;">104</div><div class="t" style="left:134.30px;top:333.68px;font-size:10.3px;color:#111111;">Product XYZ 104 ABC</div><div class="t" style="left:373.26px;top:333.60px;font-size:10.4px;color:#111111;">Category 1</div><div class="t" style="left:471.41px;top:333.00px;font-size:11.1px;color:#111111;">346,0</div><div class="t" style="left:89.59px;top:350.26px;font-size:10.8px;color:#111111;">105</div><div class="t" style="left:134.30px;top:350.68px;font-size:10.3px;color:#111111;">Product XYZ 105 ABC</div><div class="t" style="left:373.26px;top:350.60px;font-size:10.4px;color:#111111;">Category 1</div><div class="t" style="left:474.50px;top:350.00px;font-size:11.1px;color:#111111;">65,0</div><div class="t" style="left:89.59px;top:366.26px;font-size:10.8px;color:#111111;">106</div><div class="t" style="left:134.30px;top:366.68px;font-size:10.3px;color:#111111;">Product XYZ 106 ABC</div><div class="t" style="left:373.26px;top:366.60px;font-size:10.4px;color:#111111;">Category 1</div><div class="t" style="left:471.41px;top:366.00px;font-size:11.1px;color:#111111;">177,0</div><div class="t" style="left:89.59px;top:382.26px;font-size:10.8px;color:#111111;">107</div><div class="t" style="left:134.30px;top:382.68px;font-size:10.3px;color:#111111;">Product XYZ 107 ABC</div><div class="t" style="left:373.26px;top:382.60px;font-size:10.4px;color:#111111;">Category 1</div><div class="t" style="left:474.50px;top:382.00px;font-size:11.1px;color:#111111;">82,0</div><div class="t" style="left:89.59px;top:398.26px;font-size:10.8px;color:#111111;">108</div><div class="t" style="left:134.30px;top:398.68px;font-size:10.3px;color:#111111;">Product XYZ 108 ABC</div><div class="t" style="left:373.26px;top:398.60px;font-size:10.4px;color:#111111;">Category 1</div><div class="t" style="left:471.41px;top:398.00px;font-size:11.1px;color:#111111;">488,0</div><div class="t" style="left:89.59px;top:414.26px;font-size:10.8px;color:#111111;">109</div><div class="t" style="left:134.30px;top:414.68px;font-size:10.3px;color:#111111;">Product XYZ 109 ABC</div><div class="t" style="left:373.26px;top:414.60px;font-size:10.4px;color:#111111;">Category 1</div><div class="t" style="left:474.50px;top:414.00px;font-size:11.1px;color:#111111;">74,0</div><div class="t" style="left:89.99px;top:431.26px;font-size:10.8px;color:#111111;">110</div><div class="t" style="left:134.30px;top:431.68px;font-size:10.3px;color:#111111;">Product XYZ 110 ABC</div><div class="t" style="left:373.26px;top:431.60px;font-size:10.4px;color:#111111;">Category 1</div><div class="t" style="left:471.41px;top:431.00px;font-size:11.1px;color:#111111;">308,0</div><div class="t" style="left:90.39px;top:447.26px;font-size:10.8px;color:#111111;">111</div><div class="t" style="left:134.30px;top:447.68px;font-size:10.3px;color:#111111;">Product XYZ 111 ABC</div><div class="t" style="left:373.26px;top:447.60px;font-size:10.4px;color:#111111;">Category 1</div><div class="t" style="left:471.41px;top:447.00px;font-size:11.1px;color:#111111;">291,0</div><div class="t" style="left:89.99px;top:463.26px;font-size:10.8px;color:#111111;">112</div><div class="t" style="left:134.30px;top:463.68px;font-size:10.3px;color:#111111;">Product XYZ 112 ABC</div><div class="t" style="left:373.26px;top:463.60px;font-size:10.4px;color:#111111;">Category 1</div><div class="t" style="left:471.41px;top:463.00px;font-size:11.1px;color:#111111;">130,0</div><div class="t" style="left:89.99px;top:479.26px;font-size:10.8px;color:#111111;">113</div><div class="t" style="left:134.30px;top:479.68px;font-size:10.3px;color:#111111;">Product XYZ 113 ABC</div><div class="t" style="left:373.26px;top:479.60px;font-size:10.4px;color:#111111;">Category 2</div><div class="t" style="left:474.50px;top:479.00px;font-size:11.1px;color:#111111;">39,0</div><div class="t" style="left:89.99px;top:495.26px;font-size:10.8px;color:#111111;">114</div><div class="t" style="left:134.30px;top:495.68px;font-size:10.3px;color:#111111;">Product XYZ 114 ABC</div><div class="t" style="left:373.26px;top:495.60px;font-size:10.4px;color:#111111;">Category 2</div><div class="t" style="left:471.41px;top:495.00px;font-size:11.1px;color:#111111;">175,0</div><div class="t" style="left:89.99px;top:512.26px;font-size:10.8px;color:#111111;">115</div><div class="t" style="left:134.30px;top:512.68px;font-size:10.3px;color:#111111;">Product XYZ 115 ABC</div><div class="t" style="left:373.26px;top:512.60px;font-size:10.4px;color:#111111;">Category 2</div><div class="t" style="left:471.41px;top:512.00px;font-size:11.1px;color:#111111;">280,0</div><div class="t" style="left:89.99px;top:528.26px;font-size:10.8px;color:#111111;">116</div><div class="t" style="left:134.30px;top:528.68px;font-size:10.3px;color:#111111;">Product XYZ 116 ABC</div><div class="t" style="left:373.26px;top:528.60px;font-size:10.4px;color:#111111;">Category 2</div><div class="t" style="left:471.41px;top:528.00px;font-size:11.1px;color:#111111;">238,0</div><div class="t" style="left:89.99px;top:544.26px;font-size:10.8px;color:#111111;">117</div><div class="t" style="left:134.30px;top:544.68px;font-size:10.3px;color:#111111;">Product XYZ 117 ABC</div><div class="t" style="left:373.26px;top:544.60px;font-size:10.4px;color:#111111;">Category 2</div><div class="t" style="left:471.41px;top:544.00px;font-size:11.1px;color:#111111;">148,0</div><div class="t" style="left:89.99px;top:560.26px;font-size:10.8px;color:#111111;">118</div><div class="t" style="left:134.30px;top:560.68px;font-size:10.3px;color:#111111;">Product XYZ 118 ABC</div><div class="t" style="left:373.26px;top:560.60px;font-size:10.4px;color:#111111;">Category 2</div><div class="t" style="left:471.41px;top:560.00px;font-size:11.1px;color:#111111;">343,0</div><div class="t" style="left:89.99px;top:576.26px;font-size:10.8px;color:#111111;">119</div><div class="t" style="left:134.30px;top:576.68px;font-size:10.3px;color:#111111;">Product XYZ 119 ABC</div><div class="t" style="left:373.26px;top:576.60px;font-size:10.4px;color:#111111;">Category 2</div><div class="t" style="left:471.41px;top:576.00px;font-size:11.1px;color:#111111;">355,0</div><div class="t" style="left:89.59px;top:593.26px;font-size:10.8px;color:#111111;">120</div><div class="t" style="left:134.30px;top:593.68px;font-size:10.3px;color:#111111;">Product XYZ 120 ABC</div><div class="t" style="left:373.26px;top:593.60px;font-size:10.4px;color:#111111;">Category 2</div><div class="t" style="left:471.41px;top:593.00px;font-size:11.1px;color:#111111;">379,0</div><div class="t" style="left:89.59px;top:609.26px;font-size:10.8px;color:#111111;">121</div><div class="t" style="left:134.30px;top:609.68px;font-size:10.3px;color:#111111;">Product XYZ 121 ABC</div><div class="t" style="left:373.26px;top:609.60px;font-size:10.4px;color:#111111;">Category 2</div><div class="t" style="left:471.41px;top:609.00px;font-size:11.1px;color:#111111;">453,0</div><div class="t" style="left:595.99px;top:285.26px;font-size:10.8px;color:#111111;">301</div><div class="t" style="left:641.50px;top:285.30px;font-size:10.75px;color:#111111;">Cell Phones Universe</div><div class="t" style="left:877.86px;top:285.30px;font-size:10.75px;color:#111111;">North</div><div class="t" style="left:595.99px;top:301.26px;font-size:10.8px;color:#111111;">302</div><div class="t" style="left:641.50px;top:301.30px;font-size:10.75px;color:#111111;">Envigo Computer Repair</div><div class="t" style="left:877.86px;top:301.30px;font-size:10.75px;color:#111111;">North</div><div class="t" style="left:595.99px;top:317.26px;font-size:10.8px;color:#111111;">303</div><div class="t" style="left:641.50px;top:317.30px;font-size:10.75px;color:#111111;">My Broken Phone</div><div class="t" style="left:876.95px;top:317.30px;font-size:10.75px;color:#111111;">South</div><div class="t" style="left:595.99px;top:333.26px;font-size:10.8px;color:#111111;">304</div><div class="t" style="left:641.50px;top:333.30px;font-size:10.75px;color:#111111;">My Cell Phone Doctor</div><div class="t" style="left:880.24px;top:333.30px;font-size:10.75px;color:#111111;">East</div><div class="t" style="left:595.99px;top:350.26px;font-size:10.8px;color:#111111;">305</div><div class="t" style="left:641.50px;top:350.30px;font-size:10.75px;color:#111111;">Tampa Computer Doctors</div><div class="t" style="left:880.24px;top:350.30px;font-size:10.75px;color:#111111;">East</div><div class="t" style="left:595.99px;top:366.26px;font-size:10.8px;color:#111111;">306</div><div class="t" style="left:641.50px;top:366.30px;font-size:10.75px;color:#111111;">Pyramids Computers</div><div class="t" style="left:878.85px;top:366.30px;font-size:10.75px;color:#111111;">West</div><div class="t" style="left:595.99px;top:382.26px;font-size:10.8px;color:#111111;">307</div><div class="t" style="left:641.50px;top:382.30px;font-size:10.75px;color:#111111;">Genie Computer Systems</div><div class="t" style="left:878.85px;top:382.30px;font-size:10.75px;color:#111111;">West</div><div class="t" style="left:595.99px;top:398.26px;font-size:10.8px;color:#111111;">308</div><div class="t" style="left:641.50px;top:398.30px;font-size:10.75px;color:#111111;">REK Computers</div><div class="t" style="left:878.85px;top:398.30px;font-size:10.75px;color:#111111;">West</div><div class="t" style="left:595.99px;top:414.26px;font-size:10.8px;color:#111111;">309</div><div class="t" style="left:641.50px;top:414.30px;font-size:10.75px;color:#111111;">Mr.Cell Smartphone Repair</div><div class="t" style="left:876.95px;top:414.30px;font-size:10.75px;color:#111111;">South</div><div class="t" style="left:595.99px;top:431.26px;font-size:10.8px;color:#111111;">310</div><div class="t" style="left:641.50px;top:431.30px;font-size:10.75px;color:#111111;">Macdroid Store</div><div class="t" style="left:876.95px;top:431.30px;font-size:10.75px;color:#111111;">South</div><div class="t" style="left:596.39px;top:447.26px;font-size:10.8px;color:#111111;">311</div><div class="t" style="left:641.50px;top:447.30px;font-size:10.75px;color:#111111;">Fidalgo's Computer Repair</div><div class="t" style="left:877.86px;top:447.30px;font-size:10.75px;color:#111111;">North</div><div class="t" style="left:595.99px;top:463.26px;font-size:10.8px;color:#111111;">312</div><div class="t" style="left:641.50px;top:463.30px;font-size:10.75px;color:#111111;">PC Repair by Abel LLC</div><div class="t" style="left:877.86px;top:463.30px;font-size:10.75px;color:#111111;">North</div><div class="t" style="left:595.99px;top:479.26px;font-size:10.8px;color:#111111;">313</div><div class="t" style="left:641.50px;top:479.30px;font-size:10.75px;color:#111111;">Computer Repair Doctor</div><div class="t" style="left:877.86px;top:479.30px;font-size:10.75px;color:#111111;">North</div><div class="t" style="left:595.99px;top:495.26px;font-size:10.8px;color:#111111;">314</div><div class="t" style="left:641.50px;top:495.30px;font-size:10.75px;color:#111111;">KB's Computer Warehouse, Inc.</div><div class="t" style="left:880.24px;top:495.30px;font-size:10.75px;color:#111111;">East</div><div class="t" style="left:595.99px;top:512.26px;font-size:10.8px;color:#111111;">315</div><div class="t" style="left:641.50px;top:512.30px;font-size:10.75px;color:#111111;">CapitalTech Smartphone Repair</div><div class="t" style="left:877.86px;top:512.30px;font-size:10.75px;color:#111111;">North</div><div class="t" style="left:595.99px;top:528.26px;font-size:10.8px;color:#111111;">316</div><div class="t" style="left:641.50px;top:528.30px;font-size:10.75px;color:#111111;">Computer Services by Kenny P</div><div class="t" style="left:880.24px;top:528.30px;font-size:10.75px;color:#111111;">East</div><div class="t" style="left:595.99px;top:544.26px;font-size:10.8px;color:#111111;">317</div><div class="t" style="left:641.50px;top:544.30px;font-size:10.75px;color:#111111;">Blinking PC</div><div class="t" style="left:880.24px;top:544.30px;font-size:10.75px;color:#111111;">East</div><div class="t" style="left:595.99px;top:560.26px;font-size:10.8px;color:#111111;">318</div><div class="t" style="left:641.50px;top:560.30px;font-size:10.75px;color:#111111;">Dog Bytes Computers Inc</div><div class="t" style="left:878.85px;top:560.30px;font-size:10.75px;color:#111111;">West</div><div class="t" style="left:595.99px;top:576.26px;font-size:10.8px;color:#111111;">319</div><div class="t" style="left:641.50px;top:576.30px;font-size:10.75px;color:#111111;">Gainesville PC Repair</div><div class="t" style="left:878.85px;top:576.30px;font-size:10.75px;color:#111111;">West</div><div class="t" style="left:595.99px;top:593.26px;font-size:10.8px;color:#111111;">320</div><div class="t" style="left:641.50px;top:593.30px;font-size:10.75px;color:#111111;">Ray's Connecting Point</div><div class="t" style="left:876.95px;top:593.30px;font-size:10.75px;color:#111111;">South</div></div>
<div class="t" style="left:255.50px;top:233.29px;font-size:11px;color:#1a1a1a;font-weight:bold;-webkit-text-stroke:0.05px currentColor;transform:scaleX(1.0203);">Product Table</div>
<div class="t" style="left:714.95px;top:233.29px;font-size:11px;color:#1a1a1a;font-weight:bold;-webkit-text-stroke:0.05px currentColor;">Customer Table</div>
<div class="t" style="left:78.40px;top:252.19px;font-size:11px;color:#1a1a1a;font-weight:bold;-webkit-text-stroke:0.05px currentColor;transform:scaleX(0.9096);">Product</div>
<div class="t" style="left:85.25px;top:268.49px;font-size:11px;color:#1a1a1a;font-weight:bold;-webkit-text-stroke:0.05px currentColor;transform:scaleX(0.8982);">Code</div>
<div class="t" style="left:191.95px;top:260.29px;font-size:11px;color:#1a1a1a;font-weight:bold;-webkit-text-stroke:0.05px currentColor;transform:scaleX(0.9199);">Product Description</div>
<div class="t" style="left:376.50px;top:260.29px;font-size:11px;color:#1a1a1a;font-weight:bold;-webkit-text-stroke:0.05px currentColor;transform:scaleX(0.9228);">Category</div>
<div class="t" style="left:462.80px;top:260.29px;font-size:11px;color:#1a1a1a;font-weight:bold;-webkit-text-stroke:0.05px currentColor;transform:scaleX(0.9124);">Unit Cost</div>
<div class="t" style="left:580.70px;top:252.19px;font-size:11px;color:#1a1a1a;font-weight:bold;-webkit-text-stroke:0.05px currentColor;transform:scaleX(0.9349);">Customer</div>
<div class="t" style="left:592.05px;top:268.49px;font-size:11px;color:#1a1a1a;font-weight:bold;-webkit-text-stroke:0.05px currentColor;transform:scaleX(0.9272);">Code</div>
<div class="t" style="left:699.40px;top:260.29px;font-size:11px;color:#1a1a1a;font-weight:bold;-webkit-text-stroke:0.05px currentColor;transform:scaleX(0.9554);">Customer Name</div>
<div class="t" style="left:853.70px;top:260.29px;font-size:11px;color:#1a1a1a;font-weight:bold;-webkit-text-stroke:0.05px currentColor;transform:scaleX(0.9509);">Customer Area</div>
<div style="position:absolute;left:1214px;top:161px;width:13px;height:14px;background:#fff;border:1px solid #c6c6c6;box-sizing:border-box"></div>
<svg style="position:absolute;left:1216px;top:164px" width="9" height="6"><path d="M0.5 5.5 L4.5 1 L8.5 5.5 Z" fill="#777"/></svg>
<div style="position:absolute;left:1214px;top:175px;width:13px;height:422px;background:#dedede"></div>
<div style="position:absolute;left:1214px;top:174px;width:13px;height:90px;background:#fff;border:1px solid #c6c6c6;box-sizing:border-box"></div>
<div style="position:absolute;left:1214px;top:597px;width:13px;height:12px;background:#fff"></div>
<svg style="position:absolute;left:1216px;top:600px" width="9" height="6"><path d="M0.5 0.5 L4.5 5 L8.5 0.5 Z" fill="#777"/></svg>
<div style="position:absolute;left:0px;top:611px;width:1229px;height:1px;background:#c6c6c6"></div>
<div style="position:absolute;left:0px;top:612px;width:1229px;height:18px;background:#f1f1f1"></div>
<div class="t" style="left:6.00px;top:616.19px;font-size:11px;color:#555;transform:scaleX(0.9120);">Ready</div>
<div style="position:absolute;left:973px;top:612px;width:34px;height:18px;background:#c6c6c6"></div>
<svg style="position:absolute;left:982px;top:614px" width="14" height="13"><g fill="none" stroke="#555" stroke-width="1.1"><rect x="1" y="1" width="12" height="11"/><path d="M5 1 V12 M9 1 V12 M1 4.7 H13 M1 8.3 H13"/></g></svg>
<svg style="position:absolute;left:1016px;top:614px" width="15" height="13"><g fill="none" stroke="#666" stroke-width="1.1"><rect x="1" y="1" width="12.5" height="11"/><path d="M4 2.5 V10.5 M10.5 2.5 V10.5 M5.5 4 H9 M5.5 6.5 H9 M5.5 9 H9"/></g></svg>
<svg style="position:absolute;left:1051px;top:614px" width="14" height="13"><g fill="none" stroke="#666" stroke-width="1.1"><rect x="1" y="1" width="12" height="11"/><path d="M4.5 1 V6.5 M8.5 1 V6.5 M1 6.5 H8.5 M1 8.5 H13"/></g></svg>
<div style="position:absolute;left:1080px;top:620px;width:5px;height:1.5px;background:#555"></div>
<div style="position:absolute;left:1089px;top:620px;width:89px;height:1px;background:#999"></div>
<div style="position:absolute;left:1127px;top:615px;width:4px;height:10px;background:#666"></div>
<div style="position:absolute;left:1131px;top:617px;width:1px;height:5px;background:#c8c8c8"></div>
<div style="position:absolute;left:1160px;top:620px;width:1px;height:1px;background:#999"></div>
<svg style="position:absolute;left:1180px;top:615px" width="10" height="10"><path d="M5 1 V9 M1 5 H9" stroke="#555" stroke-width="1.6"/></svg>
<div class="t" style="left:1203.00px;top:616.19px;font-size:11px;color:#555;transform:scaleX(0.8630);">%90</div>
</body></html>
